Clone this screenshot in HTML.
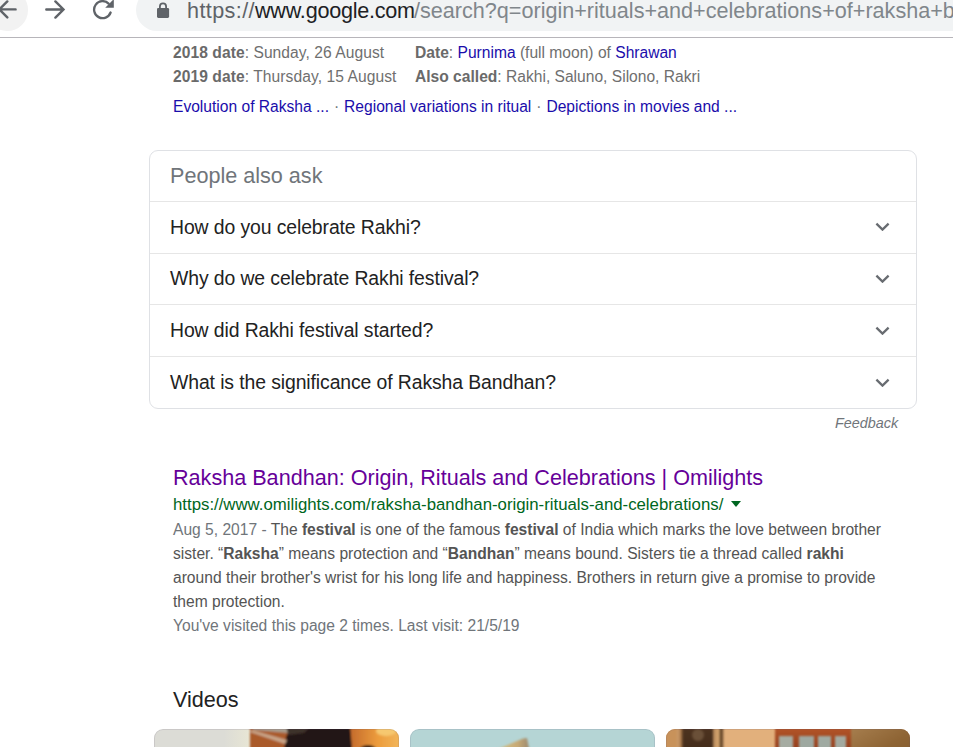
<!DOCTYPE html>
<html><head><meta charset="utf-8">
<style>
*{margin:0;padding:0;box-sizing:border-box}
html,body{width:953px;height:747px;overflow:hidden;background:#fff}
body{position:relative;font-family:"Liberation Sans",sans-serif}
.abs{position:absolute;white-space:nowrap}
#top{position:absolute;left:0;top:0;width:953px;height:37px;background:#fff}
#hline{position:absolute;left:0;top:37px;width:953px;height:1px;background:#b7b5ba}
#backc{position:absolute;left:-14px;top:-11px;width:41.5px;height:41.5px;border-radius:50%;background:#f2f2f2}
#omni{position:absolute;left:136px;top:-11px;width:840px;height:42px;border-radius:21px;background:#f1f3f4}
.urlt{top:-2px;font-size:21.6px;color:#80868b;line-height:26px}
.info{font-size:15.6px;color:#6f6f6f;line-height:24px}
.info b{color:#6a6a6a}
.lnk{color:#1a0dab}
.dot{color:#70757a;padding:0 0.6px}
#paa{position:absolute;left:149px;top:150px;width:768px;height:259px;border:1px solid #dfe1e5;border-radius:9px}
.sep{position:absolute;left:150px;width:766px;height:1px;background:#e6e6e6}
.q{font-size:19.4px;letter-spacing:-0.1px;color:#222;line-height:24px;left:170px}
.chev{position:absolute;left:875px;width:15px;height:9px}
#fb{left:835px;top:413px;font-size:14.4px;font-style:italic;color:#70757a;line-height:20px}
#title{left:173px;top:465px;font-size:21.6px;color:#660099;line-height:26px}
#cite{left:173px;top:493px;font-size:16.8px;color:#006621;line-height:24px}
.st{font-size:15.6px;color:#545454;line-height:24px;left:173px}
.st .f{color:#70757a}
#vis{left:173px;top:614px;font-size:15.6px;color:#70757a;line-height:24px}
#vid{left:173px;top:687px;font-size:21.6px;color:#222;line-height:26px}
.th{position:absolute;top:729px;height:40px;border-radius:9px;overflow:hidden}
.p{position:absolute;top:0;bottom:0}
.th::after{content:"";position:absolute;left:0;top:0;right:0;bottom:0;border-radius:9px;box-shadow:inset 0 0 0 1px rgba(90,80,110,.14)}
</style></head><body>
<div id="top">
  <div id="backc"></div>
  <svg style="position:absolute;left:0;top:0" width="130" height="37" viewBox="0 0 130 37">
    <g fill="none" stroke="#5f6368" stroke-width="2.4" stroke-linecap="round" stroke-linejoin="miter">
    <path d="M0 9.4H15.6M7.3 1.4L-0.7 9.4L7.3 17.4"/>
    <path d="M46.3 9.5H62.5M55.4 1.4L63.5 9.5L55.4 17.6"/>
    </g>
    
    <path d="M108.6 3.6A8.5 8.5 0 1 0 110.6 12.5" fill="none" stroke="#5f6368" stroke-width="2.3" stroke-linecap="round"/>
    <path d="M105.2 7.7H113.8V-0.9Z" fill="#5f6368"/>
  </svg>
  <div id="omni"></div>
  <svg style="position:absolute;left:150px;top:0" width="26" height="26" viewBox="0 0 26 26">
    <rect x="7" y="8" width="12.1" height="9.9" rx="1.3" fill="#5f6368"/>
    <path d="M9.9 8.5V6.5A3.1 3.1 0 0 1 16.1 6.5V8.5" fill="none" stroke="#5f6368" stroke-width="1.8"/>
  </svg>
  <div class="abs urlt" style="left:187px;color:#5f6368;letter-spacing:0.4px">https://</div>
  <div class="abs urlt" style="left:255px;color:#202124;letter-spacing:-0.24px">www.google.com</div>
  <div class="abs urlt" style="left:414px">/search?q=origin+rituals+and+celebrations+of+raksha+bandhan</div>
</div>
<div id="hline"></div>

<div class="abs info" style="left:173px;top:41px;letter-spacing:0.06px"><b>2018 date</b>: Sunday, 26 August</div>
<div class="abs info" style="left:173px;top:65px;letter-spacing:0.07px"><b>2019 date</b>: Thursday, 15 August</div>
<div class="abs info" style="left:415px;top:41px"><b>Date</b>: <span class="lnk">Purnima</span> (full moon) of <span class="lnk">Shrawan</span></div>
<div class="abs info" style="left:415px;top:65px"><b>Also called</b>: Rakhi, Saluno, Silono, Rakri</div>
<div class="abs info" style="left:173px;top:95px"><span class="lnk">Evolution of Raksha ...</span> <span class="dot">·</span> <span class="lnk">Regional variations in ritual</span> <span class="dot">·</span> <span class="lnk">Depictions in movies and ...</span></div>

<div id="paa"></div>
<div class="abs" style="left:170px;top:163px;font-size:21.6px;color:#70757a;line-height:26px">People also ask</div>
<div class="sep" style="top:201px"></div>
<div class="sep" style="top:253px"></div>
<div class="sep" style="top:304px"></div>
<div class="sep" style="top:356px"></div>
<div class="abs q" style="top:215px">How do you celebrate Rakhi?</div>
<div class="abs q" style="top:266px">Why do we celebrate Rakhi festival?</div>
<div class="abs q" style="top:318px">How did Rakhi festival started?</div>
<div class="abs q" style="top:370px">What is the significance of Raksha Bandhan?</div>
<svg class="chev" style="top:222px" viewBox="0 0 15 9"><path d="M1.4 1.6L7.5 7.6L13.6 1.6" fill="none" stroke="#686c71" stroke-width="2.3"/></svg>
<svg class="chev" style="top:274px" viewBox="0 0 15 9"><path d="M1.4 1.6L7.5 7.6L13.6 1.6" fill="none" stroke="#686c71" stroke-width="2.3"/></svg>
<svg class="chev" style="top:326px" viewBox="0 0 15 9"><path d="M1.4 1.6L7.5 7.6L13.6 1.6" fill="none" stroke="#686c71" stroke-width="2.3"/></svg>
<svg class="chev" style="top:378px" viewBox="0 0 15 9"><path d="M1.4 1.6L7.5 7.6L13.6 1.6" fill="none" stroke="#686c71" stroke-width="2.3"/></svg>
<div id="fb" class="abs">Feedback</div>

<div id="title" class="abs">Raksha Bandhan: Origin, Rituals and Celebrations | Omilights</div>
<div id="cite" class="abs">https://www.omilights.com/raksha-bandhan-origin-rituals-and-celebrations/</div>
<svg style="position:absolute;left:731px;top:501px" width="10" height="6" viewBox="0 0 10 6"><path d="M0 0H10L5 6Z" fill="#006621"/></svg>
<div class="abs st" style="top:518px"><span class="f">Aug 5, 2017 - </span>The <b>festival</b> is one of the famous <b>festival</b> of India which marks the love between brother</div>
<div class="abs st" style="top:542px">sister. “<b>Raksha</b>” means protection and “<b>Bandhan</b>” means bound. Sisters tie a thread called <b>rakhi</b></div>
<div class="abs st" style="top:566px">around their brother's wrist for his long life and happiness. Brothers in return give a promise to provide</div>
<div class="abs st" style="top:590px">them protection.</div>
<div id="vis" class="abs">You've visited this page 2 times. Last visit: 21/5/19</div>

<div id="vid" class="abs">Videos</div>
<div class="th" style="left:154px;width:245px;background:#dcdcd6">
  <svg style="position:absolute;left:0;top:0" width="245" height="40"><defs><filter id="b1" x="-10%" y="-50%" width="120%" height="200%"><feGaussianBlur stdDeviation="1.2"/></filter>
  <linearGradient id="cg" x1="0" x2="1"><stop offset="0" stop-color="#dcdcd6"/><stop offset="1" stop-color="#e8e6d4"/></linearGradient><linearGradient id="og" x1="0" x2="1"><stop offset="0" stop-color="#c46a2c"/><stop offset="0.5" stop-color="#ec9c3c"/><stop offset="1" stop-color="#f4bc62"/></linearGradient></defs>
  <rect x="70" y="0" width="26" height="40" fill="url(#cg)"/>
  <g filter="url(#b1)">
  <rect x="96" y="-5" width="155" height="50" fill="#221612"/>
  <polygon points="96,-5 138,-5 132,8 126,45 96,45" fill="#aa5a2a"/>
  <polygon points="96,-5 136,-5 134,4 100,1" fill="#a89c8c"/>
  
  <polygon points="96,3 98,1 133,11 131,15" fill="#c8a488"/>
  <polygon points="132,-5 160,-5 150,4 134,6" fill="#3e302a"/>
  <polygon points="196,-5 251,-5 251,45 204,45 198,20" fill="url(#og)"/>
  <ellipse cx="232" cy="2" rx="10" ry="5" fill="#f6c870"/>
  <ellipse cx="214" cy="22" rx="9" ry="6" fill="#2a1a12"/>
  </g>
  </svg>
</div>
<div class="th" style="left:410px;width:245px;background:#b5d5d5">
  <svg style="position:absolute;left:0;top:0" width="244" height="40"><defs><filter id="bl"><feGaussianBlur stdDeviation="1"/></filter><linearGradient id="tg" x1="0" x2="1"><stop offset="0" stop-color="#d8d098"/><stop offset="0.7" stop-color="#c8aa74"/><stop offset="1" stop-color="#9a8870"/></linearGradient></defs><polygon points="78,24 113,9.5 117,9 120,24" fill="url(#tg)" filter="url(#bl)"/></svg>
</div>
<div class="th" style="left:666px;width:244px;background:#e2b07a">
 <div style="position:absolute;left:-4px;top:-4px;width:252px;height:48px;filter:blur(0.8px)">
  <div class="p" style="left:0;width:15px;background:#c8925a"></div>
  <div class="p" style="left:15px;width:6px;background:linear-gradient(90deg,#d0a070,#b08050 60%,#5a3a20)"></div>
  <div class="p" style="left:21px;width:30px;background:linear-gradient(180deg,#4e3420,#3a2616)"></div>
  <div class="p" style="left:30px;width:12px;top:4px;height:12px;background:#6a5038;border-radius:6px"></div>
  <div class="p" style="left:51px;width:11px;background:linear-gradient(90deg,#b08458,#d8a870 50%,#4a3018 75%,#d0a070)"></div>
  <div class="p" style="left:62px;width:51px;background:#e2b07c"></div>
  <div class="p" style="left:113px;width:76px;background:linear-gradient(180deg,#b8582a,#9a4420 40%,#943e1c)"></div>
  <div class="p" style="left:117px;width:14px;top:11px;background:#a6aca2"></div>
  <div class="p" style="left:137px;width:15px;top:11px;background:#9ea8a0"></div>
  <div class="p" style="left:156px;width:13px;top:11px;background:#a0aaa2"></div>
  <div class="p" style="left:173px;width:11px;top:11px;background:#a4aaa0"></div>
  <div class="p" style="left:189px;width:63px;background:linear-gradient(150deg,#a88050,#8e6434 50%,#80582c)"></div>
 </div>
</div>
</body></html>
